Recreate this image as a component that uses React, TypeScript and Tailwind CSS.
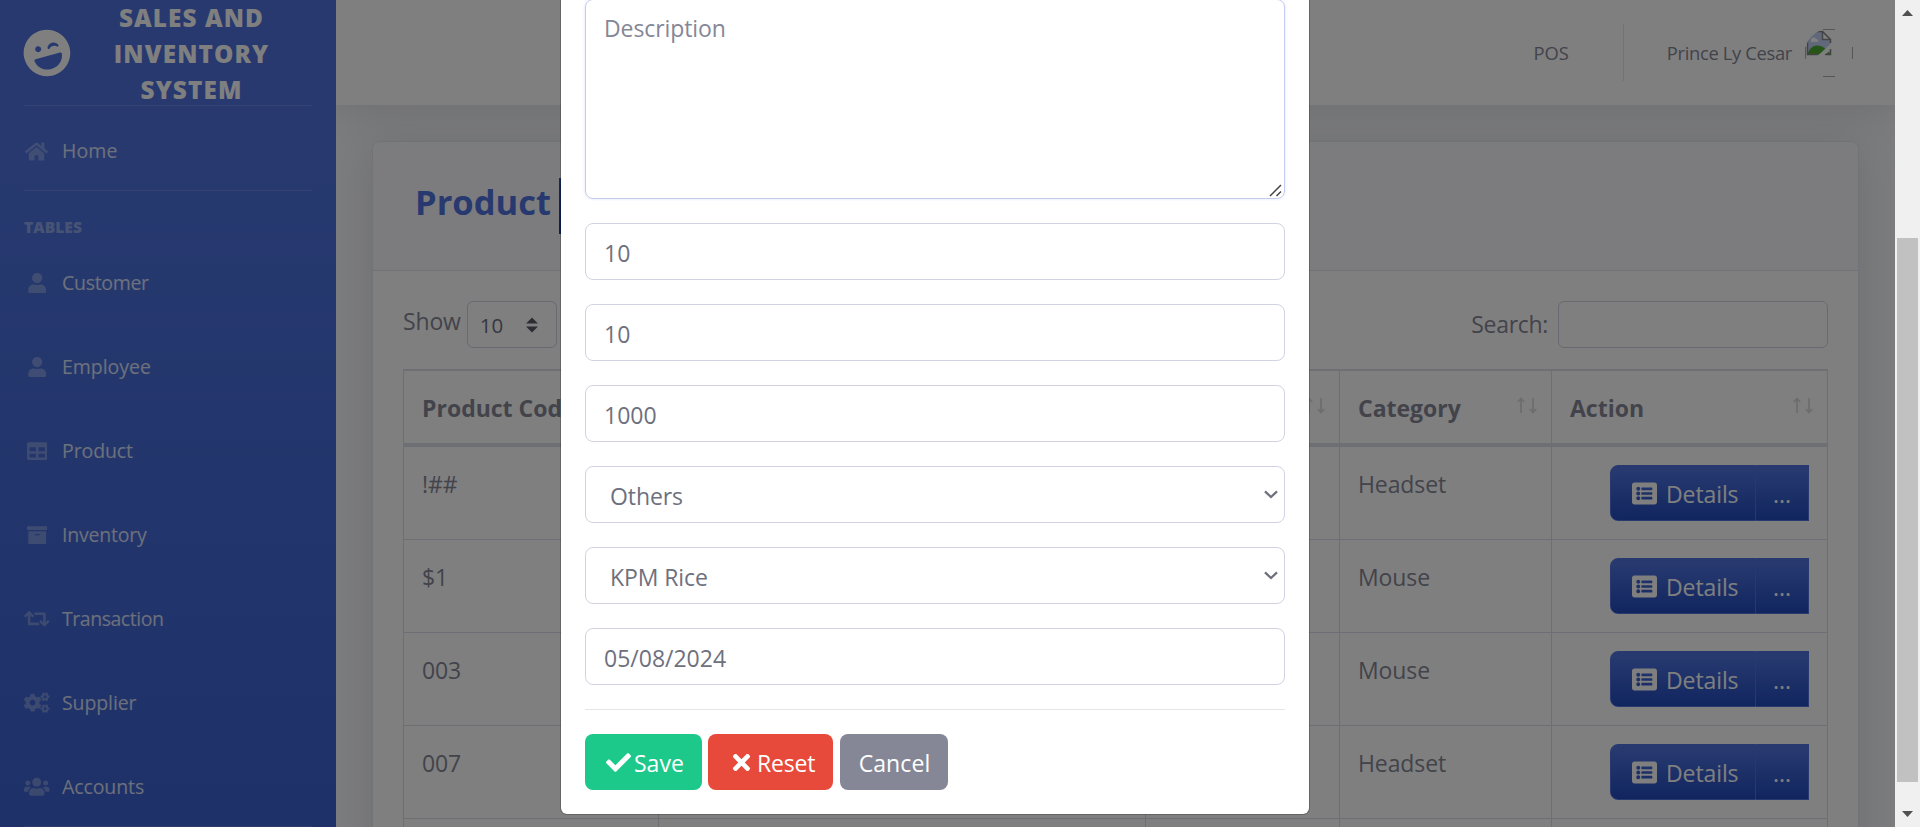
import React from "react";
import {
  FaArchive,
  FaCheck,
  FaCogs,
  FaHome,
  FaLaughWink,
  FaListAlt,
  FaRetweet,
  FaTable,
  FaTimes,
  FaUser,
  FaUsers,
} from "react-icons/fa";

type IconType = React.ComponentType<{ className?: string }>;
type NavItem = { label: string; icon: IconType; size: string; tracking: string };

const navItems: NavItem[] = [
  { label: "Customer", icon: FaUser, size: "text-[20.4px]", tracking: "tracking-[-0.3px]" },
  { label: "Employee", icon: FaUser, size: "text-[20.4px]", tracking: "tracking-[-0.03px]" },
  { label: "Product", icon: FaTable, size: "text-[20.4px]", tracking: "tracking-[-0.1px]" },
  { label: "Inventory", icon: FaArchive, size: "text-[20.4px]", tracking: "tracking-[-0.2px]" },
  { label: "Transaction", icon: FaRetweet, size: "text-[25.5px]", tracking: "tracking-[-0.46px]" },
  { label: "Supplier", icon: FaCogs, size: "text-[25.5px]", tracking: "tracking-[-0.1px]" },
  { label: "Accounts", icon: FaUsers, size: "text-[25.5px]", tracking: "tracking-[-0.1px]" },
];

const rows = [
  { code: "!##", category: "Headset" },
  { code: "$1", category: "Mouse" },
  { code: "003", category: "Mouse" },
  { code: "007", category: "Headset" },
];

const columns = "grid grid-cols-[255px_487px_194px_212px_276px] border-l border-[#dddfeb]";

function NavLink({ label, icon: Icon, size, tracking }: NavItem) {
  return (
    <a className="flex h-[84px] items-center px-6 text-[19.5px] text-white/80">
      <span className={`flex w-[25.5px] shrink-0 justify-center text-white/30 ${size}`}>
        <Icon className="shrink-0" />
      </span>
      <span className={`ml-[12.5px] pb-px ${tracking}`}>{label}</span>
    </a>
  );
}

function Sidebar() {
  return (
    <aside className="h-[1760px] w-[336px] shrink-0 bg-[linear-gradient(180deg,#4e73df_10%,#224abe_100%)]">
      <div className="flex h-[105px] items-center px-6">
        <FaLaughWink className="-ml-px size-[48px] shrink-0 -rotate-[15deg] text-white" />
        <div className="mx-6 w-[194px] pt-[2px] text-center text-[24.3px] leading-9 font-extrabold tracking-[1.1px] text-white">
          <div>SALES AND</div>
          <div>INVENTORY</div>
          <div>SYSTEM</div>
        </div>
      </div>
      <div className="mx-6 h-px bg-white/15" />
      <div className="pt-[3px]">
        <NavLink label="Home" icon={FaHome} size="text-[23px]" tracking="tracking-[0.1px]" />
      </div>
      <div className="mx-6 mt-[-3px] h-px bg-white/15" />
      <div className="h-[50px] px-6 pt-[24px] text-[15.6px] leading-[24px] font-extrabold tracking-[0.05px] text-white/40">
        TABLES
      </div>
      {navItems.map((item) => (
        <NavLink key={item.label} {...item} />
      ))}
      <div className="mx-6 mt-[-3px] h-px bg-white/15" />
    </aside>
  );
}

function BrokenAvatar() {
  return (
    <svg width="48" height="48" viewBox="0 0 48 48">
      <defs>
        <clipPath id="avatar">
          <circle cx="24" cy="24" r="24" />
        </clipPath>
      </defs>
      <g clipPath="url(#avatar)">
        <path d="M2.500 2.500h15l8 8v15h-23z" fill="#c0d0f5" />
        <path d="M17.500 2.500v8h8" fill="#fff" stroke="#8a8a8a" strokeWidth="1.500" />
        <path d="M6 11c1-3 4-3 5-1 3 0 3 3 1 3H6z" fill="#fff" />
        <path d="M2.500 25.500c2-7 6-9 10-9s9 3 13 9z" fill="#4faa2f" />
        <path d="M13 26.500 26.500 14v6l-7 6.500z" fill="#fff" />
        <path d="M25.500 14v-3.500l-8-8h-15v23H13M20 25.500h5.500V20" fill="none" stroke="#858585" strokeWidth="1.500" />
      </g>
      <path d="M18 .5h12M18 47.500h12M.5 18v12M47.500 18v12" stroke="#acacac" strokeWidth="1" fill="none" />
    </svg>
  );
}

function Topbar() {
  return (
    <header className="relative flex h-[105px] items-center justify-end bg-white pr-[42px] text-[18.4px] text-[#858796] shadow-[0_4px_42px_rgba(58,59,69,0.15)]">
      <span className="pt-px">POS</span>
      <span className="mr-[43px] ml-[54px] h-[57px] w-px bg-[#e3e6f0]" />
      <span className="mr-[13px] pt-px tracking-[-0.35px]">Prince Ly Cesar</span>
      <BrokenAvatar />
    </header>
  );
}

function SortArrows() {
  return (
    <svg
      width="20"
      height="17"
      viewBox="0 0 20 17"
      fill="none"
      stroke="#858796"
      strokeWidth="1.700"
      className="mt-[26px] shrink-0 opacity-30"
    >
      <path d="M4 16V1.500M.8 5 4 1.500 7.200 5" />
      <path d="M16 1v14.500M12.800 12 16 15.500 19.200 12" />
    </svg>
  );
}

function HeadCell({ label }: { label: string }) {
  return (
    <div className="flex h-[78px] justify-between border-t-2 border-r border-b-4 border-[#dddfeb] pr-[14px] pl-[18px]">
      <span className="pt-[19px] leading-9 font-bold">{label}</span>
      <SortArrows />
    </div>
  );
}

function RowActions() {
  return (
    <div className="flex h-14 text-white">
      <div className="flex w-[146px] items-center rounded-l-[8px] border border-[#4e73df] bg-[linear-gradient(180deg,#4e73df_10%,#224abe_100%)] pl-[21px]">
        <FaListAlt className="text-[25px]" />
        <span className="ml-[9px] pt-[3px] tracking-[-0.1px]">Details</span>
      </div>
      <div className="flex w-[53px] items-center border border-l-0 border-[#4e73df] bg-[linear-gradient(180deg,#4e73df_10%,#224abe_100%)] pl-[17px]">
        <span className="pt-[3px]">...</span>
      </div>
    </div>
  );
}

const cell = "h-[93px] border-r border-b border-[#dddfeb] pt-[19px] pl-[18px] leading-9 tracking-[-0.1px]";

function ProductCard() {
  return (
    <section className="mx-9 mt-9 h-[1400px] rounded-[8px] border border-[#e3e6f0] bg-white shadow-[0_4px_42px_rgba(58,59,69,0.15)]">
      <div className="flex h-[129px] items-start rounded-t-[8px] border-b border-[#e3e6f0] bg-[#f8f9fc] pt-9 pl-[42px]">
        <h4 className="pt-[2px] text-[34.5px] leading-[44px] font-bold text-[#4e73df]">Product</h4>
        <span className="ml-[8px] h-14 w-14 rounded-r-[8px] bg-[linear-gradient(180deg,#2e50c0_0%,#1a3cab_100%)]" />
      </div>
      <div className="px-[30px] pt-[30px]">
        <div className="flex h-[47px] justify-between">
          <div className="flex">
            <span className="pt-[2px] leading-9 tracking-[-0.15px]">Show</span>
            <div className="ml-[6px] flex h-[47px] w-[90px] items-center justify-between rounded-[6px] border border-[#d1d3e2] pr-[18px] pl-[12px] text-[20.5px] text-[#6e707e]">
              <span className="pt-[2px]">10</span>
              <svg width="12" height="16" viewBox="0 0 12 16" fill="#5a5c69">
                <path d="M0 6.500h12L6 .500zM0 9.500h12L6 15.500z" />
              </svg>
            </div>
          </div>
          <div className="flex">
            <span className="pt-[5px] leading-9 tracking-[-0.3px]">Search:</span>
            <div className="ml-[10px] h-[47px] w-[270px] rounded-[6px] border border-[#d1d3e2] bg-white" />
          </div>
        </div>
        <div className="mt-[21px]">
          <div className={columns}>
            <HeadCell label="Product Code" />
            <HeadCell label="Name" />
            <HeadCell label="" />
            <HeadCell label="Category" />
            <HeadCell label="Action" />
          </div>
          {rows.map((row) => (
            <div key={row.code} className={columns}>
              <div className={cell}>{row.code}</div>
              <div className={cell} />
              <div className={cell} />
              <div className={cell}>{row.category}</div>
              <div className="flex h-[93px] justify-end border-r border-b border-[#dddfeb] pt-[18px] pr-[18px]">
                <RowActions />
              </div>
            </div>
          ))}
          <div className={columns}>
            <div className={cell} />
            <div className={cell} />
            <div className={cell} />
            <div className={cell} />
            <div className={cell} />
          </div>
        </div>
      </div>
    </section>
  );
}

const field =
  "flex h-[57px] items-center justify-between rounded-[8px] border border-[#d1d3e2] bg-white text-[#6e707e]";

function TextField({ value }: { value: string }) {
  return (
    <div className={`${field} pl-[18px]`}>
      <span className="pt-1">{value}</span>
    </div>
  );
}

function SelectField({ value }: { value: string }) {
  return (
    <div className={`${field} pr-[6px] pl-[24px]`}>
      <span className="pt-1 tracking-[-0.1px]">{value}</span>
      <svg
        width="14"
        height="9"
        viewBox="0 0 14 9"
        fill="none"
        stroke="#6e707e"
        strokeWidth="2.300"
        className="mb-px"
      >
        <path d="m1 1.300 6 5.700 6-5.700" />
      </svg>
    </div>
  );
}

function Modal() {
  return (
    <div className="absolute top-[-300px] left-[560px] flex h-[1115px] w-[750px] flex-col justify-end rounded-[7px] border border-black/20 bg-white bg-clip-padding px-6 pb-[24px]">
      <div className="flex flex-col gap-6">
        <div className="relative h-[200px] rounded-[8px] border border-[#c6cdec] pt-[10px] pl-[18px] leading-9 tracking-[-0.1px] text-[#858796] shadow-[0_0_3px_rgba(78,115,223,0.2)]">
          Description
          <svg
            width="13"
            height="13"
            viewBox="0 0 13 13"
            fill="none"
            stroke="#444"
            strokeWidth="1.500"
            className="absolute right-[2px] bottom-px"
          >
            <path d="M1 12 12 1M7.500 12 12 7.500" />
          </svg>
        </div>
        <TextField value="10" />
        <TextField value="10" />
        <TextField value="1000" />
        <SelectField value="Others" />
        <SelectField value="KPM Rice" />
        <TextField value="05/08/2024" />
      </div>
      <div className="mt-6 h-px bg-black/10" />
      <div className="mt-6 flex h-14 text-white">
        <button className="flex w-[117px] items-center rounded-[8px] bg-[#1cc88a] pl-[21px]">
          <FaCheck className="text-[25px]" />
          <span className="ml-[3px] pt-[3px]">Save</span>
        </button>
        <button className="ml-[6px] flex w-[125px] items-center rounded-[8px] bg-[#e74a3b] pl-[21px]">
          <FaTimes className="text-[25px]" />
          <span className="ml-[3px] pt-[3px] tracking-[-0.2px]">Reset</span>
        </button>
        <button className="ml-[7px] flex w-[108px] items-center justify-center rounded-[8px] bg-[#858796] pt-[3px] pl-px tracking-[0.1px]">
          Cancel
        </button>
      </div>
    </div>
  );
}

function Scrollbar() {
  return (
    <div className="flex w-[25px] shrink-0 flex-col items-center bg-[#f0f0f0]">
      <svg width="11" height="6" viewBox="0 0 11 6" fill="#505050" className="mt-[10px]">
        <path d="M0 6h11L5.500 0z" />
      </svg>
      <div className="mt-[222px] h-[544px] w-[21px] bg-[#c1c1c1]" />
      <svg width="11" height="6" viewBox="0 0 11 6" fill="#505050" className="mt-[29px]">
        <path d="M0 0h11L5.500 6z" />
      </svg>
    </div>
  );
}

export default function App() {
  return (
    <div className="flex h-[827px] w-[1920px] overflow-hidden bg-white font-['Open_Sans','Noto_Sans',sans-serif] text-[23px] text-[#858796]">
      <div className="relative h-[827px] w-[1895px] overflow-hidden">
        <div className="flex h-[1760px] bg-[#f8f9fc]">
          <Sidebar />
          <main className="min-w-0 flex-1 overflow-hidden">
            <Topbar />
            <ProductCard />
          </main>
        </div>
        <div className="absolute inset-0 bg-black/50" />
        <Modal />
      </div>
      <Scrollbar />
    </div>
  );
}
